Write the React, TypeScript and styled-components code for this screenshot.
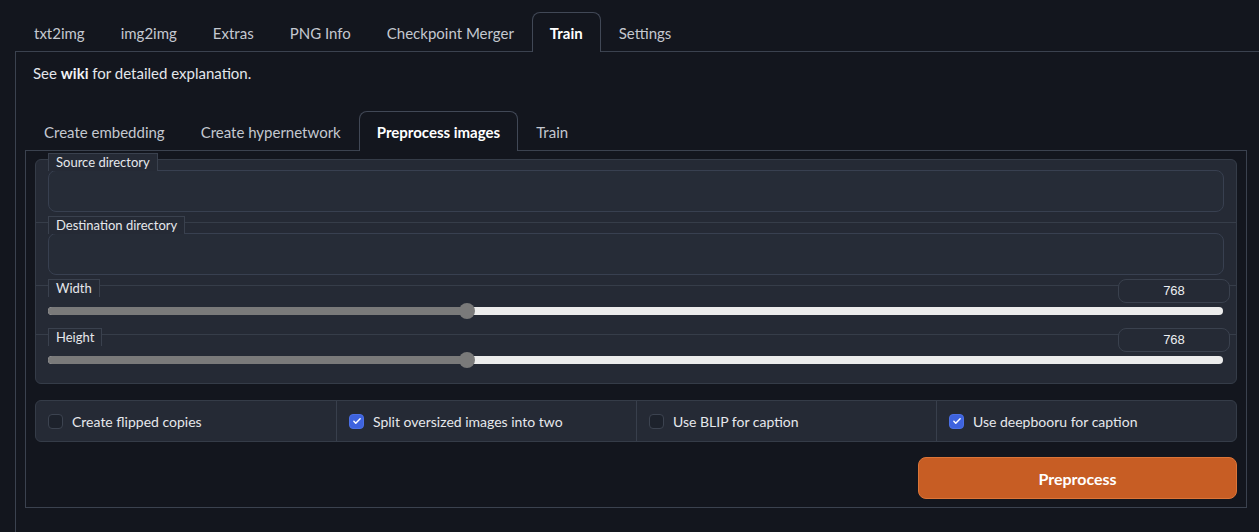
import styled, { createGlobalStyle } from 'styled-components';

const GlobalStyle = createGlobalStyle`
  body {
    margin: 0;
    background: #13161e;
    font-family: Lato, 'Noto Sans', sans-serif;
    color: #e3e6eb;
    overflow: hidden;
  }
`;

const Page = styled.div`
  padding: 12px 0 0 15px;
`;

const TabBar = styled.div`
  display: flex;
  height: 39px;
  padding-left: 1px;
  position: relative;
  z-index: 1;
`;

const Tab = styled.div<{ $active?: boolean; $pad: number }>`
  display: flex;
  align-items: center;
  height: 40px;
  box-sizing: border-box;
  padding: 0 ${(p) => p.$pad}px;
  margin-bottom: -1px;
  font-size: 15px;
  color: ${(p) => (p.$active ? '#ffffff' : '#c4c8d0')};
  font-weight: ${(p) => (p.$active ? 700 : 400)};
  border: 1px solid ${(p) => (p.$active ? '#414856' : 'transparent')};
  border-bottom: none;
  border-radius: 8px 8px 0 0;
  background: ${(p) => (p.$active ? '#13161e' : 'transparent')};
`;

const OuterPanel = styled.div`
  border: 1px solid #3b424f;
  border-right: none;
  padding: 11px 0 40px 9px;
  width: calc(100vw - 15px);
  box-sizing: border-box;
`;

const Info = styled.div`
  font-size: 15px;
  line-height: 20px;
  margin-left: 8px;
  margin-bottom: 28px;
  b {
    font-weight: 700;
    color: #f1f3f6;
  }
`;

const InnerPanel = styled.div`
  width: 1222px;
  box-sizing: border-box;
  border: 1px solid #3b424f;
  padding: 8px 9px 8px 9px;
  display: flex;
  flex-direction: column;
`;

const Group = styled.div`
  border: 1px solid #353c48;
  border-radius: 6px;
  background: #252a35;
`;

const Block = styled.div<{ $first?: boolean; $slider?: boolean }>`
  position: relative;
  border-top: ${(p) => (p.$first ? 'none' : '1px solid #363d49')};
  padding: ${(p) => (p.$slider ? '21px 13px 19px 12px' : '10px 12px')};
`;

const BlockLabel = styled.span`
  position: absolute;
  top: -7px;
  left: 12px;
  height: 17px;
  line-height: 16px;
  padding: 0 7px;
  font-size: 13px;
  color: #e6e8ec;
  background: #252a35;
  border: 1px solid #3a414e;
  border-bottom: none;
`;

const TextBox = styled.div`
  height: 42px;
  box-sizing: border-box;
  border: 1px solid #384050;
  border-radius: 8px;
  background: #262c37;
`;

const NumberBox = styled.div`
  position: absolute;
  top: -7px;
  right: 6px;
  width: 112px;
  height: 24px;
  box-sizing: border-box;
  border: 1px solid #3a414e;
  border-radius: 8px;
  background: #252a35;
  font-size: 13px;
  line-height: 22px;
  text-align: center;
  color: #eceef1;
  font-family: 'Liberation Sans', Arial, sans-serif;
`;

const Track = styled.div`
  position: relative;
  height: 8px;
  border-radius: 4px;
  background: #ececec;
`;

const Fill = styled.div`
  height: 100%;
  border-radius: 4px 0 0 4px;
  background: #7a7a7a;
`;

const Thumb = styled.div`
  position: absolute;
  top: -4px;
  width: 16px;
  height: 16px;
  margin-left: -8px;
  border-radius: 50%;
  background: #7a7a7a;
`;

const CheckRow = styled.div`
  display: grid;
  grid-template-columns: repeat(4, 1fr);
  margin-top: 16px;
  height: 42px;
  box-sizing: border-box;
  border: 1px solid #353c48;
  border-radius: 6px;
  background: #252a35;
`;

const CheckCell = styled.label`
  display: flex;
  align-items: center;
  gap: 9px;
  padding: 0 12px;
  font-size: 14px;
  color: #e6e8ec;
  & + & {
    border-left: 1px solid #383f4c;
  }
`;

const Box = styled.span<{ $checked?: boolean }>`
  width: 15px;
  height: 15px;
  box-sizing: border-box;
  border-radius: 4px;
  display: flex;
  align-items: center;
  justify-content: center;
  border: 1px solid ${(p) => (p.$checked ? '#4a6fe6' : '#3c4350')};
  background: ${(p) => (p.$checked ? '#3e63de' : '#1d222c')};
`;

const ButtonRow = styled.div`
  display: flex;
  justify-content: flex-end;
  margin-top: 15px;
`;

const Button = styled.button`
  width: 319px;
  height: 42px;
  border: 1px solid #dc7538;
  border-radius: 8px;
  background: #c75d24;
  color: #ffffff;
  font-family: Lato, sans-serif;
  font-size: 16px;
  font-weight: 700;
`;

const Check = () => (
  <svg width="10" height="10" viewBox="0 0 16 16">
    <path d="M3 8.5l3 3 7-7" fill="none" stroke="#fff" strokeWidth="2.4" strokeLinecap="round" strokeLinejoin="round" />
  </svg>
);

const topTabs = ['txt2img', 'img2img', 'Extras', 'PNG Info', 'Checkpoint Merger', 'Train', 'Settings'];
const innerTabs = ['Create embedding', 'Create hypernetwork', 'Preprocess images', 'Train'];
const checks = [
  { label: 'Create flipped copies', checked: false },
  { label: 'Split oversized images into two', checked: true },
  { label: 'Use BLIP for caption', checked: false },
  { label: 'Use deepbooru for caption', checked: true },
];

const Slider = ({ label, value, min, max }: { label: string; value: number; min: number; max: number }) => {
  const frac = (value - min) / (max - min);
  // thumb travels inside the track, inset by its radius
  const pos = `calc(8px + ${frac} * (100% - 16px))`;
  return (
    <Block $slider>
      <BlockLabel>{label}</BlockLabel>
      <NumberBox>{value}</NumberBox>
      <Track>
        <Fill style={{ width: pos }} />
        <Thumb style={{ left: pos }} />
      </Track>
    </Block>
  );
};

export default function App() {
  return (
    <Page>
      <GlobalStyle />
      <TabBar>
        {topTabs.map((t, i) => (
          <Tab key={t} $pad={17} $active={i === 5}>
            {t}
          </Tab>
        ))}
      </TabBar>
      <OuterPanel>
        <Info>
          See <b>wiki</b> for detailed explanation.
        </Info>
        <TabBar>
          {innerTabs.map((t, i) => (
            <Tab key={t} $pad={17} $active={i === 2}>
              {t}
            </Tab>
          ))}
        </TabBar>
        <InnerPanel>
          <Group>
            <Block $first>
              <BlockLabel>Source directory</BlockLabel>
              <TextBox />
            </Block>
            <Block>
              <BlockLabel>Destination directory</BlockLabel>
              <TextBox />
            </Block>
            <Slider label="Width" value={768} min={64} max={2048} />
            <Slider label="Height" value={768} min={64} max={2048} />
          </Group>
          <CheckRow>
            {checks.map((c) => (
              <CheckCell key={c.label}>
                <Box $checked={c.checked}>{c.checked && <Check />}</Box>
                {c.label}
              </CheckCell>
            ))}
          </CheckRow>
          <ButtonRow>
            <Button>Preprocess</Button>
          </ButtonRow>
        </InnerPanel>
      </OuterPanel>
    </Page>
  );
}
